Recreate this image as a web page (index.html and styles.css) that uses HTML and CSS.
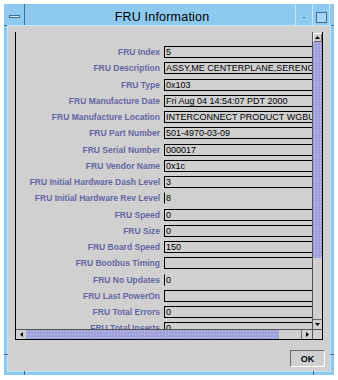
FILE: index.html
```html
<!DOCTYPE html>
<html lang="en">
<head>
    <meta charset="UTF-8">
    <title>FRU Information</title>
    <link rel="stylesheet" href="styles.css">
</head>
<body>
    <div class="window">
        <div class="titlebar">
            <div class="menu-btn"><span></span></div>
            <div class="title">FRU Information</div>
            <div class="title-btn min"><span></span></div>
            <div class="title-btn max"><span></span></div>
        </div>

        <div class="client">
            <div class="pane">
                <div class="viewport">
                    <div class="row"><div class="label">FRU Index</div><div class="field">5</div></div>
                    <div class="row"><div class="label">FRU Description</div><div class="field">ASSY,ME CENTERPLANE,SERENGETI</div></div>
                    <div class="row"><div class="label">FRU Type</div><div class="field">0x103</div></div>
                    <div class="row"><div class="label">FRU Manufacture Date</div><div class="field">Fri Aug 04 14:54:07 PDT 2000</div></div>
                    <div class="row"><div class="label">FRU Manufacture Location</div><div class="field">INTERCONNECT PRODUCT WGBUF</div></div>
                    <div class="row"><div class="label">FRU Part Number</div><div class="field">501-4970-03-09</div></div>
                    <div class="row"><div class="label">FRU Serial Number</div><div class="field">000017</div></div>
                    <div class="row"><div class="label">FRU Vendor Name</div><div class="field">0x1c</div></div>
                    <div class="row"><div class="label">FRU Initial Hardware Dash Level</div><div class="field">3</div></div>
                    <div class="row"><div class="label">FRU Initial Hardware Rev Level</div><div class="field plain">8</div></div>
                    <div class="row"><div class="label">FRU Speed</div><div class="field">0</div></div>
                    <div class="row"><div class="label">FRU Size</div><div class="field">0</div></div>
                    <div class="row"><div class="label">FRU Board Speed</div><div class="field">150</div></div>
                    <div class="row"><div class="label">FRU Bootbus Timing</div><div class="field"></div></div>
                    <div class="row"><div class="label">FRU No Updates</div><div class="field plain">0</div></div>
                    <div class="row"><div class="label">FRU Last PowerOn</div><div class="field"></div></div>
                    <div class="row"><div class="label">FRU Total Errors</div><div class="field">0</div></div>
                    <div class="row"><div class="label">FRU Total Inserts</div><div class="field">0</div></div>
                </div>

                <div class="vbar">
                    <div class="arrow up">
                        <svg width="5" height="3" viewBox="0 0 5 3"><path d="M0 3 L2.5 0 L5 3 Z" fill="#000"/></svg>
                    </div>
                    <div class="thumb v"></div>
                    <div class="track"></div>
                    <div class="arrow down">
                        <svg width="5" height="3" viewBox="0 0 5 3"><path d="M0 0 L2.5 3 L5 0 Z" fill="#000"/></svg>
                    </div>
                </div>

                <div class="hbar">
                    <div class="arrow left">
                        <svg width="3" height="5" viewBox="0 0 3 5"><path d="M3 0 L0 2.5 L3 5 Z" fill="#000"/></svg>
                    </div>
                    <div class="thumb h"></div>
                    <div class="track"></div>
                    <div class="arrow right">
                        <svg width="3" height="5" viewBox="0 0 3 5"><path d="M0 0 L3 2.5 L0 5 Z" fill="#000"/></svg>
                    </div>
                </div>

                <div class="corner"></div>
            </div>

            <div class="actions">
                <button class="ok-btn">OK</button>
            </div>
        </div>

        <!-- resize handle marks on the frame -->
        <span class="tick tick-bl"></span>
        <span class="tick tick-br"></span>
        <span class="tick tick-lb"></span>
        <span class="tick tick-rb"></span>
    </div>
</body>
</html>
```

FILE: styles.css
```css
body {
    margin: 0;
    background-color: #fff;
    font-family: "Liberation Sans", Arial, sans-serif;
}
.window {
    position: relative;
    margin: 4px 0 0 4px;
    width: 330px;
    height: 371px;
    box-sizing: border-box;
    background-color: #8ecaef;
    display: flex;
    flex-direction: column;
}
.titlebar {
    height: 21px;
    border-bottom: 1px solid #3f6f91;
    display: flex;
}
.menu-btn {
    width: 20px;
    border-right: 1px solid #3f6f91;
    display: flex;
    align-items: center;
    justify-content: center;
}
.menu-btn span {
    width: 9px;
    height: 1px;
    margin-top: 3px;
    border: 1px solid #3f6f91;
    background-color: #d6eefc;
}
.title {
    flex: 1;
    text-align: center;
    font-size: 12.5px;
    letter-spacing: 0.2px;
    line-height: 26px;
    color: #000;
    padding-left: 4px;
}
.title-btn {
    border-left: 1px solid #cbe8fa;
    display: flex;
    align-items: center;
    justify-content: center;
}
.title-btn.min {
    width: 16px;
}
.title-btn.min span {
    width: 2px;
    height: 1px;
    margin-top: 5px;
    background-color: #3f6f91;
}
.title-btn.max {
    width: 16px;
    border-right: 1px solid #cbe8fa;
    margin-right: 4px;
}
.title-btn.max span {
    width: 9px;
    height: 9px;
    margin-top: 5px;
    border: 1px solid #3f6f91;
    background-color: #a6d6f4;
}
.client {
    flex: 1;
    margin: 0 4px 4px 4px;
    background-color: #d0d0d0;
    outline: 1px solid #c2e5fb;
    display: flex;
    flex-direction: column;
}
.pane {
    margin: 6px 0 0 7px;
    width: 308px;
    height: 308px;
    box-sizing: border-box;
    border: 1px solid #000;
    border-top: none;
    display: grid;
    grid-template-columns: 296px 10px;
    grid-template-rows: 297px 10px;
}
.viewport {
    overflow: hidden;
    padding-top: 12px;
}
.row {
    display: grid;
    grid-template-columns: 144px 200px;
    column-gap: 4px;
    height: 16.25px;
    align-items: center;
}
.label {
    text-align: right;
    font-size: 8.5px;
    font-weight: bold;
    color: #6666a4;
    white-space: nowrap;
}
.field {
    height: 12px;
    box-sizing: border-box;
    border: 1px solid #000;
    font-size: 9px;
    line-height: 10px;
    color: #000;
    padding-left: 1px;
    white-space: nowrap;
    overflow: hidden;
}
.field.plain {
    border-color: transparent;
    border-left: 1px solid #000;
}
.vbar {
    border-left: 1px solid #555;
    display: flex;
    flex-direction: column;
}
.hbar {
    border-top: 1px solid #555;
    display: flex;
}
.corner {
    border-left: 1px solid #555;
    border-top: 1px solid #555;
}
.arrow {
    background-color: #d0d0d0;
    display: flex;
    align-items: center;
    justify-content: center;
    flex-shrink: 0;
}
.arrow.up {
    height: 9px;
    margin-top: 1px;
    box-shadow: inset 1px 1px #fff, inset -1px -1px #6a6a6a;
}
.arrow.down {
    height: 10px;
    border-top: 1px solid #6a6a6a;
    box-sizing: border-box;
}
.arrow.left {
    width: 10px;
}
.arrow.right {
    width: 10px;
    border-left: 1px solid #6a6a6a;
}
.thumb {
    background-color: #a0a0da;
    background-image: radial-gradient(#c8c8ee 0.6px, transparent 0.8px);
    background-size: 3px 3px;
    flex-shrink: 0;
}
.thumb.v {
    height: 216px;
}
.thumb.h {
    width: 253px;
}
.track {
    flex: 1;
}
.actions {
    display: flex;
    justify-content: flex-end;
    padding: 10px 5px 0 0;
}
.ok-btn {
    width: 35px;
    height: 17px;
    padding: 0;
    background-color: #d0d0d0;
    border: 1px solid;
    border-color: #6a6a6a #fff #fff #6a6a6a;
    font-family: "Liberation Sans", Arial, sans-serif;
    font-size: 9px;
    font-weight: bold;
    color: #000;
}
.tick {
    position: absolute;
    background-color: #3f6f91;
}
.tick-bl {
    left: 20px;
    bottom: 0;
    width: 1px;
    height: 4px;
}
.tick-br {
    right: 20px;
    bottom: 0;
    width: 1px;
    height: 4px;
}
.tick-lb {
    left: 0;
    bottom: 20px;
    width: 4px;
    height: 1px;
}
.tick-rb {
    right: 0;
    bottom: 20px;
    width: 4px;
    height: 1px;
}
```
